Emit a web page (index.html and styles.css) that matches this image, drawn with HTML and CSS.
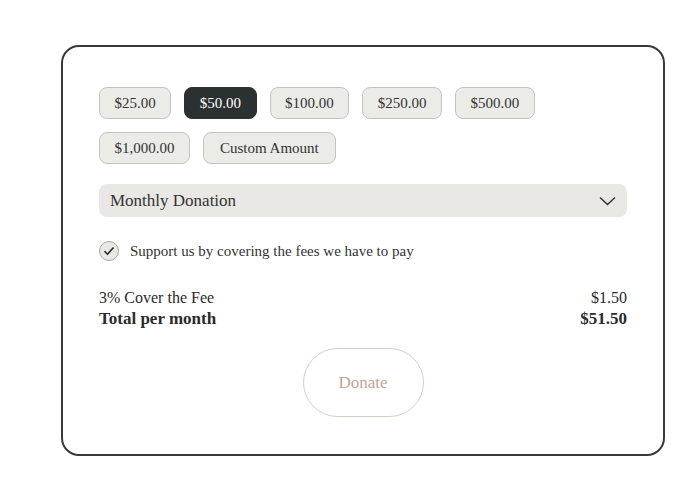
FILE: index.html
```html
<!DOCTYPE html>
<html>
<head>
<meta charset="utf-8">
<link rel="stylesheet" href="styles.css">
</head>
<body>
<div class="page">
  <form class="card">
    <div class="amounts">
      <button type="button" class="amt">$25.00</button>
      <button type="button" class="amt active">$50.00</button>
      <button type="button" class="amt">$100.00</button>
      <button type="button" class="amt">$250.00</button>
      <button type="button" class="amt">$500.00</button>
      <button type="button" class="amt">$1,000.00</button>
      <button type="button" class="amt wide">Custom Amount</button>
    </div>
    <div class="select">
      <span>Monthly Donation</span>
      <svg class="chev" width="17" height="10" viewBox="0 0 17 10"><path d="M1 1.5 L8.5 8.5 L16 1.5" fill="none" stroke="#333" stroke-width="1.5"/></svg>
    </div>
    <label class="check">
      <span class="circle"><svg width="12" height="10" viewBox="0 0 12 10"><path d="M1.5 5.2 L4.5 8.2 L10.5 1.5" fill="none" stroke="#222" stroke-width="1.6"/></svg></span>
      <span>Support us by covering the fees we have to pay</span>
    </label>
    <div class="summary">
      <div class="row"><span>3% Cover the Fee</span><span>$1.50</span></div>
      <div class="row total"><span>Total per month</span><span>$51.50</span></div>
    </div>
    <div class="actions">
      <button type="button" class="donate">Donate</button>
    </div>
  </form>
</div>
</body>
</html>
```
FILE: styles.css
```css
* { box-sizing: border-box; }
html, body { margin: 0; background: #fff; }
body {
  font-family: "Liberation Serif", "Times New Roman", serif;
  color: #2b2b2b;
}
.page {
  padding: 45px 35px 0 61px;
}
.card {
  width: 604px;
  height: 411px;
  border: 2px solid #3a3a3a;
  border-radius: 18px;
  padding: 40px 36px 37px 36px;
  display: flex;
  flex-direction: column;
}
.amounts {
  display: flex;
  flex-wrap: wrap;
  gap: 13px 13px;
  width: 470px;
}
.amt {
  height: 32px;
  padding: 0 14.5px;
  border: 1px solid #c4c4bf;
  border-radius: 8px;
  background: #ebebe7;
  font-family: inherit;
  font-size: 15px;
  color: #333;
  cursor: pointer;
}
.amt.wide {
  padding: 0 16px;
}
.amt.active {
  background: #2b3030;
  border-color: #2b3030;
  color: #fff;
}
.select {
  margin-top: 20px;
  height: 34px;
  border-radius: 8px;
  background: #e9e8e4;
  display: flex;
  align-items: center;
  justify-content: space-between;
  padding: 0 11px 0 11px;
  font-size: 17px;
  color: #333;
}
.chev { display: block; }
.check {
  margin-top: 24px;
  display: flex;
  align-items: center;
  gap: 11px;
  font-size: 15px;
  color: #333;
}
.circle {
  width: 20px;
  height: 20px;
  border-radius: 50%;
  border: 1px solid #a8a8a4;
  background: #e8e8e4;
  display: flex;
  align-items: center;
  justify-content: center;
}
.circle svg { display: block; }
.summary {
  margin-top: 26px;
  font-size: 16px;
  line-height: 21px;
}
.row {
  display: flex;
  justify-content: space-between;
}
.row.total {
  font-weight: bold;
  font-size: 17px;
}
.actions {
  margin-top: 19px;
  display: flex;
  justify-content: center;
}
.donate {
  width: 121px;
  height: 69px;
  border-radius: 35px;
  border: 1px solid #d6cdc7;
  background: #fff;
  color: #bfa596;
  font-family: inherit;
  font-size: 17px;
  cursor: pointer;
}
```
